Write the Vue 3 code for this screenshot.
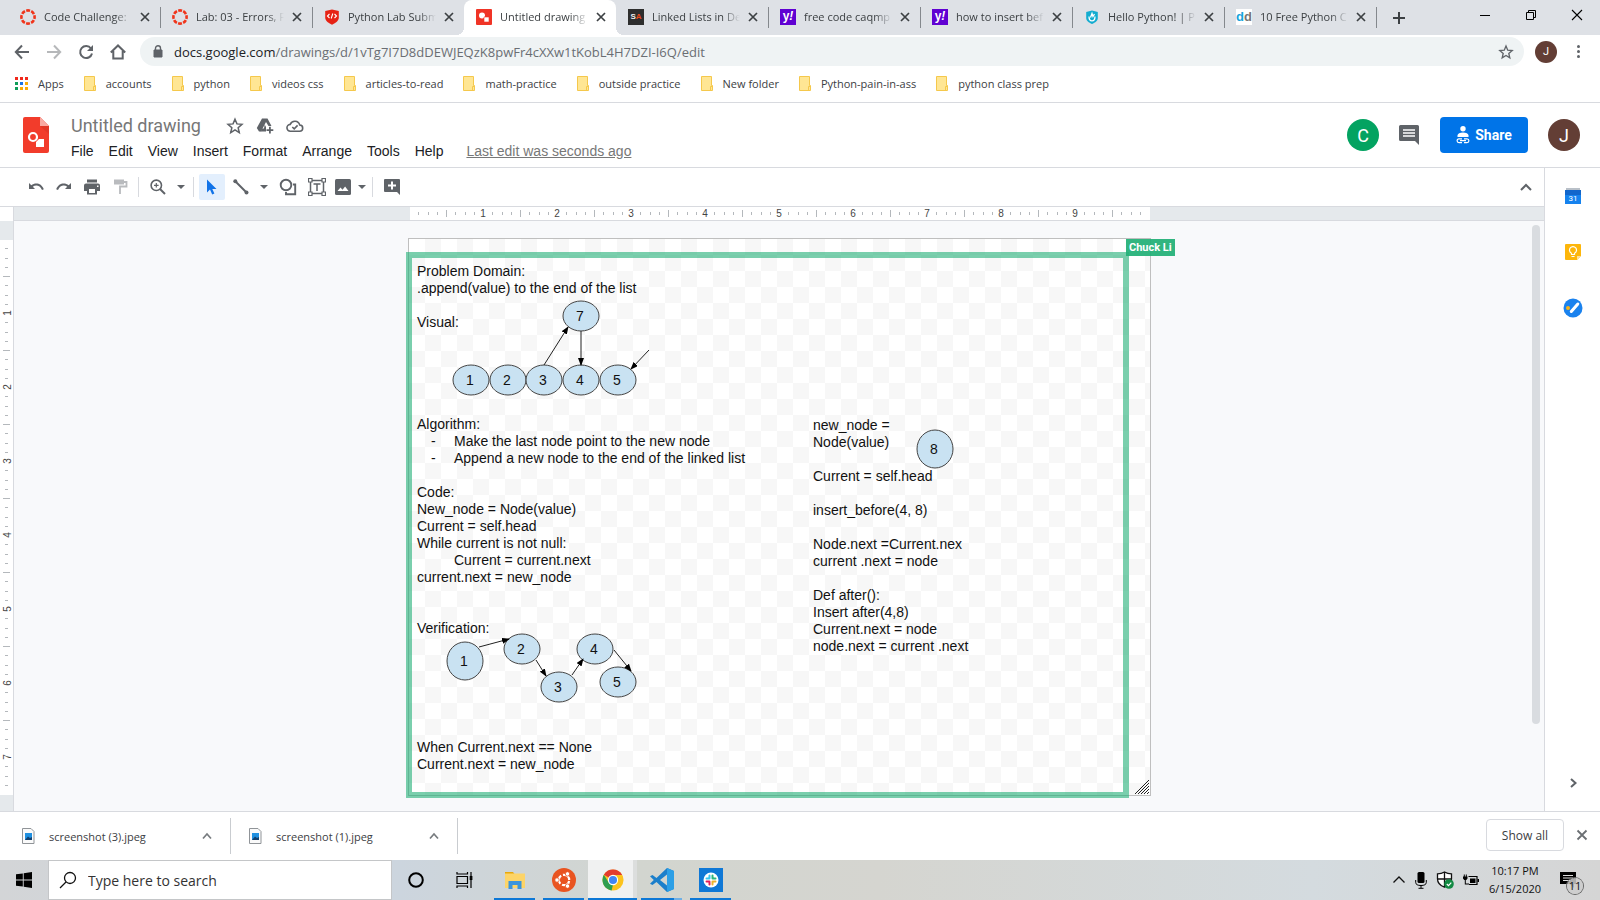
<script setup>
const tabs = [
  { title: 'Code Challenge:', icon: 'canvas' },
  { title: 'Lab: 03 - Errors, F', icon: 'canvas' },
  { title: 'Python Lab Subm', icon: 'shield' },
  { title: 'Untitled drawing', icon: 'draw', active: true },
  { title: 'Linked Lists in De', icon: 'sa' },
  { title: 'free code caqmp', icon: 'yahoo' },
  { title: 'how to insert bef', icon: 'yahoo' },
  { title: 'Hello Python! | P', icon: 'hex' },
  { title: '10 Free Python C', icon: 'dd' },
]
const bookmarks = ['accounts', 'python', 'videos css', 'articles-to-read', 'math-practice', 'outside practice', 'New folder', 'Python-pain-in-ass', 'python class prep']
const menus = ['File', 'Edit', 'View', 'Insert', 'Format', 'Arrange', 'Tools', 'Help']

const inch = 74
const ruler = (inches) => {
  const marks = []
  for (let i = 1; i < inches * 8; i++) {
    const at = Math.round((i * inch) / 8)
    marks.push(i % 8 === 0 ? { at, label: i / 8 } : { at, size: i % 4 === 0 ? 7 : 3 })
  }
  return marks
}
const across = ruler(10)
const down = ruler(7.5)

const mainText = `Problem Domain:
.append(value) to the end of the list

Visual:





Algorithm:
{-}Make the last node point to the new node
{-}Append a new node to the end of the linked list

Code:
New_node = Node(value)
Current = self.head
While current is not null:
{ }Current = current.next
current.next = new_node


Verification:






When Current.next == None
Current.next = new_node`.split('\n').map((line) => {
  const m = line.match(/^\{(.)\}(.*)$/)
  return m ? { mark: m[1], text: m[2] } : { text: line }
})
const sideText = `new_node =
Node(value)

Current = self.head

insert_before(4, 8)

Node.next =Current.nex
current .next = node

Def after():
Insert after(4,8)
Current.next = node
node.next = current .next`.split('\n')

// Node and arrow positions on the drawing canvas
const nodes = [
  { n: 7, x: 172, y: 77, r: 15 },
  { n: 1, x: 62, y: 141, r: 15 },
  { n: 2, x: 99, y: 141, r: 15 },
  { n: 3, x: 135, y: 141, r: 15 },
  { n: 4, x: 172, y: 141, r: 15 },
  { n: 5, x: 209, y: 141, r: 15 },
  { n: 8, x: 526, y: 210, r: 19 },
  { n: 1, x: 56, y: 422, r: 19 },
  { n: 2, x: 113, y: 410, r: 15 },
  { n: 3, x: 150, y: 448, r: 15 },
  { n: 4, x: 186, y: 410, r: 15 },
  { n: 5, x: 209, y: 443, r: 15 },
]
const arrows = [
  [135, 126, 159, 88],
  [172, 92, 172, 126],
  [240, 111, 222, 130],
  [70, 408, 100, 400],
  [127, 421, 137, 437],
  [163, 436, 174, 420],
  [205, 411, 222, 432],
]
const files = ['screenshot (3).jpeg', 'screenshot (1).jpeg']
</script>

<template>
  <div class="screen">
    <header class="browser">
      <div class="tabstrip">
        <div v-for="(t, i) in tabs" :key="i" class="tab" :class="{ active: t.active, plain: i === 2 }">
          <svg v-if="t.icon === 'canvas'" class="fav" viewBox="0 0 16 16"><circle cx="8" cy="8" r="6.6" fill="none" stroke="#f0351c" stroke-width="2.6" stroke-dasharray="3.9 1.28" stroke-dashoffset="2" /></svg>
          <svg v-else-if="t.icon === 'shield'" class="fav" viewBox="0 0 16 16"><path d="M8 .5 14.8 2v6.500c0 3.500-3 5.500-6.800 7.200C4.200 14 1.200 12 1.200 8.500V2z" fill="#e62214" /><path d="M5.500 5 3.500 7l2 2M10.500 5l2 2-2 2M8.800 4.500l-1.600 5" fill="none" stroke="#fff" stroke-width="1.100" /></svg>
          <svg v-else-if="t.icon === 'draw'" class="fav" viewBox="0 0 16 16"><rect width="16" height="16" rx="1" fill="#f03426" /><circle cx="6" cy="6.500" r="3" fill="#fff" /><path d="M8 8h5v5H8z" fill="#fff" stroke="#f03426" stroke-width=".6" /></svg>
          <span v-else-if="t.icon === 'sa'" class="fav badge-sa">S<b>A</b></span>
          <span v-else-if="t.icon === 'yahoo'" class="fav badge-y">y<i>!</i></span>
          <svg v-else-if="t.icon === 'hex'" class="fav" viewBox="0 0 16 16"><path d="M8 1.500 13.800 3v6c0 3-2.500 4.500-5.800 6C4.700 13.500 2.200 12 2.200 9V3z" fill="#13acd0" /><path d="M5 7.500C5 11 7 11.800 8 11.800S11 11 11 7.500M6.500 8.500 8 4.500l1 3 1.500-2.500" fill="none" stroke="#fff" stroke-width="1.300" /></svg>
          <span v-else class="fav badge-dd">d<b>d</b></span>
          <span class="tab-title">{{ t.title }}</span>
          <button class="tab-close" aria-label="Close tab"><svg width="10" height="10" viewBox="0 0 10 10"><path d="M1 1l8 8M9 1L1 9" stroke="#3c4043" stroke-width="1.700" /></svg></button>
        </div>
        <button class="newtab" aria-label="New tab"><svg width="14" height="14" viewBox="0 0 14 14"><path d="M7 1v12M1 7h12" stroke="#3c4043" stroke-width="2" /></svg></button>
        <div class="winctl">
          <button aria-label="Minimize"><svg width="12" height="12" viewBox="0 0 12 12"><path d="M1 6.500h10" stroke="#000" /></svg></button>
          <button aria-label="Restore"><svg width="12" height="12" viewBox="0 0 12 12" fill="none" stroke="#000"><path d="M1.500 3.500h7v7h-7zM3.500 3V1.500h7v7H9" /></svg></button>
          <button aria-label="Close"><svg width="12" height="12" viewBox="0 0 12 12"><path d="M1 1l10 10M11 1L1 11" stroke="#000" stroke-width="1.100" /></svg></button>
        </div>
      </div>

      <div class="navbar">
        <button class="nav" aria-label="Back"><svg viewBox="0 0 16 16"><path d="M15 8H2M8 1.500 1.800 8 8 14.500" /></svg></button>
        <button class="nav dim" aria-label="Forward"><svg viewBox="0 0 16 16"><path d="M1 8h13M8 1.500 14.200 8 8 14.500" /></svg></button>
        <button class="nav" aria-label="Reload"><svg viewBox="0 0 16 16"><path d="M13 4.500A6 6 0 1 0 14 9.500" /><path d="M15 1v6H9z" fill="#5f6368" stroke="none" /></svg></button>
        <button class="nav" aria-label="Home"><svg viewBox="0 0 16 16"><path d="M.8 8.500 8 1.500l7.200 7M3.300 7v7.500h9.400V7" /></svg></button>
        <div class="omnibox">
          <svg width="10" height="13" viewBox="0 0 10 13"><path d="M1 5h8v7H1z" fill="#5f6368" stroke="#5f6368" /><path d="M2.500 5V3.300a2.500 2.500 0 0 1 5 0V5" fill="none" stroke="#5f6368" stroke-width="1.400" /></svg>
          <a class="url" href="#"><span>docs.google.com</span>/drawings/d/1vTg7I7D8dDEWJEQzK8pwFr4cXXw1tKobL4H7DZI-I6Q/edit</a>
          <svg width="16" height="16" viewBox="0 0 24 24"><path d="m12 3 2.600 6.200 6.700.6-5.100 4.400 1.500 6.600-5.700-3.500-5.700 3.500 1.500-6.600-5.100-4.400 6.700-.6z" fill="none" stroke="#5f6368" stroke-width="2" /></svg>
        </div>
        <button class="avatar tiny" aria-label="Profile">J</button>
        <button class="dots" aria-label="Menu"><i></i><i></i><i></i></button>
      </div>

      <nav class="bookmarks">
        <a href="#" class="apps"><svg width="13" height="13" viewBox="0 0 13 13"><path d="M0 0h3v3H0zM5 0h3v3H5zM10 0h3v3h-3z" fill="#f0291c" /><path d="M0 5h3v3H0zM0 10h3v3H0z" fill="#0f9d58" /><path d="M5 5h3v3H5z" fill="#1a73e8" /><path d="M10 5h3v3h-3zM5 10h3v3H5zM10 10h3v3h-3z" fill="#fbab06" /></svg>Apps</a>
        <a v-for="b in bookmarks" :key="b" href="#"><svg width="12" height="15" viewBox="0 0 12 15"><path d="M.5.500h10v9h1v5H.5z" fill="#ffe694" stroke="#f5c84c" /><path d="M9.500 14V10.500h2" fill="none" stroke="#f5c84c" /></svg>{{ b }}</a>
      </nav>
    </header>

    <div class="dochead">
      <svg class="logo" width="26" height="36" viewBox="0 0 26 36"><path d="M2 0h15l9 9v25a2 2 0 0 1-2 2H2a2 2 0 0 1-2-2V2a2 2 0 0 1 2-2z" fill="#f23c2b" /><path d="M17 0l9 9h-9z" fill="#f9aaa2" /><path d="M17 9h9v8z" fill="#d23223" opacity=".5" /><circle cx="10" cy="20" r="4" fill="none" stroke="#fff" stroke-width="2.200" /><path d="M13 25l3-3h5v8h-8z" fill="#fff" /></svg>
      <div class="titles">
        <div class="titlerow">
          <h1>Untitled drawing</h1>
          <button aria-label="Star"><svg width="18" height="18" viewBox="0 0 24 24"><path d="m12 3 2.600 6.200 6.700.6-5.100 4.400 1.500 6.600-5.700-3.500-5.700 3.500 1.500-6.600-5.100-4.400 6.700-.6z" fill="none" stroke="#5f6368" stroke-width="2" /></svg></button>
          <button aria-label="Add shortcut to Drive"><svg width="18" height="18" viewBox="0 0 18 18" fill="#5f6368"><path d="M6 1.500h5.500L15.500 9h-3L10 5 5 14.500H3L.8 11z" /><path d="M8.700 7.500 10 10v4.500H4.500L6.300 11.500H8z" /><path d="M13 9.800h1.800v2.500h2.500V14h-2.500v2.500H13V14h-2.500v-1.700H13z" /></svg></button>
          <button aria-label="Saved to Drive"><svg width="18" height="18" viewBox="0 0 18 18" fill="none" stroke="#5f6368" stroke-width="1.600"><path d="M4.500 14.200a3.400 3.400 0 0 1-.3-6.800 5 5 0 0 1 9.500.6 3.100 3.100 0 0 1-.2 6.200z" /><path d="M6.300 10l1.900 1.900 3.400-3.500" /></svg></button>
        </div>
        <nav class="menus">
          <button v-for="m in menus" :key="m">{{ m }}</button>
          <a href="#">Last edit was seconds ago</a>
        </nav>
      </div>
      <div class="people">
        <button class="avatar green" aria-label="Chuck Li">C</button>
        <button class="comment" aria-label="Comments"><svg width="20" height="20" viewBox="0 0 20 20"><path d="M1.500 0h17A1.500 1.500 0 0 1 20 1.500V20l-4-4H1.500A1.500 1.500 0 0 1 0 14.500v-13A1.500 1.500 0 0 1 1.500 0z" fill="#5f6368" /><path d="M4 5h12M4 8h12M4 11h12" stroke="#fff" stroke-width="1.600" /></svg></button>
        <button class="share"><svg width="14" height="18" viewBox="0 0 14 18"><circle cx="7" cy="2.800" r="2.700" fill="#fff" /><path d="M1.500 11V9.500C1.500 7.500 4 6.500 7 6.500s5.500 1 5.500 3V11z" fill="#fff" /><path d="M6 12.800H3a1.900 1.900 0 0 0 0 3.800h3M8 12.800h3a1.900 1.900 0 0 1 0 3.800H8M4 14.700h6" fill="none" stroke="#fff" stroke-width="1.200" /></svg>Share</button>
        <button class="avatar" aria-label="Account">J</button>
      </div>
    </div>

    <div class="body">
      <main class="editor">
        <div class="tools">
          <button aria-label="Undo"><svg viewBox="0 0 18 18"><path d="M2 5v6h6L5.800 8.800C8.500 6.800 13 7 15 12l1.800-.7C14.500 4.800 8 4.300 4.300 7.300z" fill="#5f6368" /></svg></button>
          <button aria-label="Redo"><svg viewBox="0 0 18 18"><path d="M16 5v6h-6l2.200-2.200C9.500 6.800 5 7 3 12l-1.800-.7C3.500 4.800 10 4.300 13.700 7.300z" fill="#5f6368" /></svg></button>
          <button aria-label="Print"><svg viewBox="0 0 18 18" fill="#5f6368"><path d="M4 1.500h10v3H4z" /><path fill-rule="evenodd" d="M3 5.500h12a2 2 0 0 1 2 2V13h-3v3.500H4V13H1V7.500a2 2 0 0 1 2-2zM6 11v4h6v-4zm8-3.500V9h1.500V7.500z" /></svg></button>
          <button aria-label="Paint format"><svg viewBox="0 0 18 18"><path d="M3 1.500h10v5H3z" fill="#b9bbbe" /><path d="M13 4h2.500v4.500H9V16" fill="none" stroke="#b9bbbe" stroke-width="1.800" /></svg></button>
          <span class="sep"></span>
          <button aria-label="Zoom"><svg viewBox="0 0 18 18" fill="none" stroke="#5f6368"><circle cx="7.300" cy="7.300" r="5.200" stroke-width="1.600" /><path d="m11 11 5 5" stroke-width="2" /><path d="M7.300 5v4.600M5 7.300h4.600" stroke-width="1.200" /></svg></button>
          <button class="drop" aria-label="Zoom options"></button>
          <span class="sep"></span>
          <button class="on" aria-label="Select"><svg viewBox="0 0 18 18"><path d="M4 1.500v13l3-3 2.200 5 2.200-1L9.300 11h4.200z" fill="#1173e8" /></svg></button>
          <button aria-label="Line"><svg viewBox="0 0 18 18"><path d="m3.500 3.500 11 11" stroke="#5f6368" stroke-width="2" /><circle cx="3.300" cy="3.300" r="2" fill="#5f6368" /><circle cx="14.500" cy="14.500" r="2" fill="#5f6368" /></svg></button>
          <button class="drop" aria-label="Line options"></button>
          <button class="wide" aria-label="Shape"><svg viewBox="0 0 18 18" fill="none" stroke="#5f6368" stroke-width="1.900"><circle cx="7" cy="7" r="5.300" /><path d="M14 6.500h2.200v9.700H7V14" /></svg></button>
          <button aria-label="Text box"><svg viewBox="0 0 18 18"><path d="M2.500 2.500h13v13h-13zM5.500 6h7M9 6v7" fill="none" stroke="#5f6368" stroke-width="1.500" /><path d="M.5.500h3.500v3.500H.5zM14 .5h3.500v3.500H14zM.5 14h3.500v3.500H.5zM14 14h3.500v3.500H14z" fill="#fff" stroke="#5f6368" stroke-width="1.200" /></svg></button>
          <button class="tight" aria-label="Image"><svg viewBox="0 0 18 18"><rect x="1" y="1" width="16" height="16" rx="1.500" fill="#5f6368" /><path d="M3.500 13 6.500 9.500l2 2.300 2.600-3.300 3.400 4.500z" fill="#fff" /></svg></button>
          <button class="drop near" aria-label="Image options"></button>
          <span class="sep"></span>
          <button aria-label="Add comment"><svg viewBox="0 0 18 18"><path d="M2 1h14a1 1 0 0 1 1 1v15l-3-3H2a1 1 0 0 1-1-1V2a1 1 0 0 1 1-1z" fill="#5f6368" /><path d="M9 3.500v8M5 7.500h8" stroke="#fff" stroke-width="2" /></svg></button>
          <button class="hide" aria-label="Hide menus"><svg viewBox="0 0 18 18"><path d="m4 12 5-5 5 5" fill="none" stroke="#5f6368" stroke-width="2" /></svg></button>
        </div>

        <div class="hruler">
          <svg width="740" height="13" viewBox="0 0 740 13">
            <rect width="740" height="13" fill="#fff" />
            <template v-for="m in across" :key="m.at">
              <text v-if="m.label" :x="m.at - 1" y="10" class="num">{{ m.label }}</text>
              <rect v-else :x="m.at - 1" :y="m.size > 3 ? 3 : 5" width="1" :height="m.size" fill="#b4b8bc" />
            </template>
          </svg>
        </div>

        <div class="stage">
          <div class="vruler">
            <svg width="13" height="555" viewBox="0 0 13 555">
              <rect width="13" height="555" fill="#fff" />
              <template v-for="m in down" :key="m.at">
                <text v-if="m.label" :transform="`translate(11 ${m.at - 1}) rotate(-90)`" class="num">{{ m.label }}</text>
                <rect v-else :y="m.at - 1" :x="m.size > 3 ? 3 : 5" height="1" :width="m.size" fill="#b4b8bc" />
              </template>
            </svg>
          </div>
          <div class="desk">
            <div class="paper">
              <div class="maintext">
                <p v-for="(l, i) in mainText" :key="i"><span v-if="l.mark" class="mark">{{ l.mark }}</span>{{ l.text }}</p>
              </div>
              <div class="sidetext">
                <p v-for="(l, i) in sideText" :key="i">{{ l }}</p>
              </div>
              <svg class="graph" width="741" height="556" viewBox="0 0 741 556">
                <defs><marker id="head" markerWidth="8" markerHeight="6" refX="7" refY="3" orient="auto" markerUnits="userSpaceOnUse"><path d="M0 0l8 3-8 3z" /></marker></defs>
                <g v-for="(c, i) in nodes" :key="i">
                  <ellipse :cx="c.x" :cy="c.y" rx="18" :ry="c.r" />
                  <text :x="c.x - 1" :y="c.y + 5">{{ c.n }}</text>
                </g>
                <line v-for="(a, i) in arrows" :key="'a' + i" :x1="a[0]" :y1="a[1]" :x2="a[2]" :y2="a[3]" marker-end="url(#head)" />
              </svg>
              <svg class="grip" width="14" height="14" viewBox="0 0 14 14"><path d="M0 14 14 0M3 14 14 3M6 14l8-8M9 14l5-5M12 14l2-2" stroke="#222" /></svg>
              <div class="selection"><span>Chuck Li</span></div>
            </div>
            <div class="scrollbar"></div>
          </div>
        </div>
      </main>

      <aside class="panel">
        <button aria-label="Calendar"><svg width="20" height="20" viewBox="0 0 20 20"><path d="M3 2h14v2H3z" fill="#b9c0c8" /><path d="M2 4h16v14H2z" fill="#1582ee" /><path d="M2 4h16v5H2z" fill="#1266cb" /><text x="10" y="15" class="cal">31</text></svg></button>
        <button aria-label="Keep"><svg width="20" height="20" viewBox="0 0 20 20"><path d="M3 2h14a1 1 0 0 1 1 1v11l-4 4H3a1 1 0 0 1-1-1V3a1 1 0 0 1 1-1z" fill="#fdb60b" /><path d="M14 18v-4h4z" fill="#fde099" /><path d="M8.500 12.500v-1.300a3.500 3.500 0 1 1 3 0v1.300zM8.500 14.500h3" fill="none" stroke="#fff" stroke-width="1.200" /></svg></button>
        <button aria-label="Tasks"><svg width="20" height="20" viewBox="0 0 20 20"><circle cx="10" cy="10" r="9.500" fill="#1a82ee" /><path d="m8.300 13.500 6.500-7.500" stroke="#fff" stroke-width="3" stroke-linecap="round" /><circle cx="5" cy="10" r="2" fill="#fbb413" /></svg></button>
        <button class="last" aria-label="Hide side panel"><svg width="18" height="18" viewBox="0 0 18 18"><path d="m7 5 4.500 4L7 13" fill="none" stroke="#5f6368" stroke-width="2" /></svg></button>
      </aside>
    </div>

    <div class="downloads">
      <div v-for="f in files" :key="f" class="file">
        <svg width="13" height="16" viewBox="0 0 13 16"><path d="M.5.500h8.500l3 3v12H.5z" fill="#fafafa" stroke="#909498" /><path d="M3 5h7v7H3z" fill="#2090e0" /><path d="M3 12 6 8.500 8 10l2-1v3z" fill="#12406e" /></svg>
        <a href="#">{{ f }}</a>
        <button aria-label="File options"><svg width="12" height="12" viewBox="0 0 12 12"><path d="m2 8.500 4-4.500 4 4.500" fill="none" stroke="#777b7f" stroke-width="1.700" /></svg></button>
      </div>
      <div class="bar-actions">
        <button class="showall">Show all</button>
        <button aria-label="Close downloads"><svg width="12" height="12" viewBox="0 0 12 12"><path d="m1.500 1.500 9 9M10.500 1.500l-9 9" stroke="#6b6f73" stroke-width="1.800" /></svg></button>
      </div>
    </div>

    <footer class="taskbar">
      <button class="start" aria-label="Start"><svg width="16" height="16" viewBox="0 0 16 16"><path d="M0 2.300 6.800 1.400V7.600H0zM7.700 1.200 16 0v7.600H7.700zM0 8.400h6.800v6.200L0 13.700zM7.700 8.400H16V16l-8.300-1.200z" /></svg></button>
      <label class="search"><svg width="18" height="18" viewBox="0 0 18 18"><circle cx="11" cy="7" r="5.500" fill="none" stroke="#111" stroke-width="1.300" /><path d="m7 11-6 6" stroke="#111" stroke-width="1.300" /></svg><input type="text" placeholder="Type here to search" aria-label="Type here to search" /></label>
      <div class="pinned">
        <button aria-label="Cortana"><svg width="18" height="18" viewBox="0 0 18 18"><circle cx="8" cy="9" r="6.800" fill="none" stroke="#000" stroke-width="2" /></svg></button>
        <button aria-label="Task View"><svg width="20" height="18" viewBox="0 0 20 18" fill="none" stroke="#000" stroke-width="1.200"><path d="M1 5.500h10.500v7H1zM1 1v2h10.500V1M1 17v-2h10.500v2M15 1v4M15 9v8" /><path d="M14.300 5.500h1.500v3h-1.500z" fill="#000" /></svg></button>
        <button class="open" aria-label="File Explorer"><svg width="22" height="20" viewBox="0 0 22 20"><path d="M1 2h8l1.500 2H1z" fill="#e8a80c" /><path d="M1 3.500h20V18H1z" fill="#fdd468" /><path d="M4.500 19v-8h13v8h-4v-4h-5v4z" fill="#3a94dd" /></svg></button>
        <button class="open" aria-label="Ubuntu"><svg width="24" height="24" viewBox="0 0 24 24"><circle cx="12" cy="12" r="12" fill="#e95420" /><circle cx="12" cy="12" r="5.200" fill="none" stroke="#fff" stroke-width="2.200" stroke-dasharray="9 1.890" stroke-dashoffset="-1" /><g fill="#fff" stroke="#e95420" stroke-width=".8"><circle cx="5" cy="12" r="2.200" /><circle cx="15.500" cy="5.900" r="2.200" /><circle cx="15.500" cy="18.100" r="2.200" /></g></svg></button>
        <button class="open current" aria-label="Chrome"><svg width="22" height="22" viewBox="0 0 24 24"><circle cx="12" cy="12" r="11.500" fill="#fcc31e" /><path d="M12 12 2 6.300A11.500 11.500 0 0 1 22 6.500H12z" fill="#e33b2e" /><path d="M2 6.300 7.500 15 12 17l-1.500 6.400A11.500 11.500 0 0 1 2 6.300z" fill="#2f9e4f" /><circle cx="12" cy="12" r="5.600" fill="#fff" /><circle cx="12" cy="12" r="4.400" fill="#4285f4" /></svg></button>
        <button class="open multi" aria-label="Visual Studio Code"><svg width="24" height="24" viewBox="0 0 24 24"><path d="M17 0 6.500 10 2.500 7 0 8.200 3.800 12 0 15.800 2.500 17l4-3L17 24l7-3V3zM17 6.500v11L10 12z" fill="#1b7fcb" fill-rule="evenodd" /><path d="M17 0v24l7-3V3z" fill="#2c9fe6" /></svg></button>
        <button class="open" aria-label="Slack"><svg width="24" height="24" viewBox="0 0 24 24"><path d="M0 0h24v24H0z" fill="#0f78d6" /><circle cx="12" cy="12" r="7.500" fill="#fff" /><g stroke-width="2" stroke-linecap="round"><path d="M10.500 7.500v3M7.500 10.500h2" stroke="#36c5f0" /><path d="M7.500 13.500h3M10.500 14.500v2" stroke="#e01e5a" /><path d="M13.500 7.500v3M14.500 10.500h2" stroke="#2eb67d" /><path d="M13.500 13.500v3M14.500 13.500h2" stroke="#ecb22e" /></g></svg></button>
      </div>
      <div class="tray">
        <svg width="14" height="14" viewBox="0 0 14 14"><path d="m1.500 9.500 5.500-5.500 5.500 5.500" fill="none" stroke="#111" stroke-width="1.300" /></svg>
        <svg width="12" height="17" viewBox="0 0 12 17"><rect x="2.500" y="0" width="7" height="11" rx="1.500" /><path d="M.7 8v2.500c0 2 2 3 5.300 3s5.300-1 5.300-3V8M6 13.500V16M3.500 16.300h5" fill="none" stroke="#000" /></svg>
        <svg width="18" height="18" viewBox="0 0 18 18"><path d="M8.500 1C6.500 2.200 4 2.800 1.500 2.800V8c0 4 2.500 6.500 7 8.200 4.500-1.700 7-4.200 7-8.200V2.800C13 2.800 10.500 2.200 8.500 1z" fill="#fff" stroke="#111" stroke-width="1.300" /><path d="M8.500 1v15M1.500 8h14" stroke="#111" stroke-width="1.300" /><circle cx="13" cy="13" r="4.800" fill="#128a43" /><path d="m10.800 13 1.700 1.700 2.800-3" fill="none" stroke="#fff" stroke-width="1.200" /></svg>
        <svg width="16" height="12" viewBox="0 0 16 12"><path d="M5.500 2.500h8.500v8H6" fill="none" stroke="#000" stroke-width="1.200" /><path d="M7 4.500h5.500v4.500H7zM14.500 5H16v3h-1.500zM0 2.500h4.500v2L3.300 6H1.200L0 4.500zM.8.500h1v2h-1zM2.800.5h1v2h-1zM1.800 6h1v3.500H6v1H1.800z" /></svg>
        <time><span>10:17 PM</span><span>6/15/2020</span></time>
        <span class="notice"><svg width="16" height="16" viewBox="0 0 16 16"><path d="M0 0h16v12h-2v4l-4-4H0z" /><path d="M3 3.500h10M3 6h10M3 8.500h7" stroke="#ddd" /></svg><b>11</b></span>
      </div>
    </footer>
  </div>
</template>

<style>
html, body { margin: 0; }
</style>

<style scoped>
.screen { --ui: "Open Sans", "Noto Sans", sans-serif; --doc: "Liberation Sans", Arial, sans-serif; display: flex; flex-direction: column; min-height: 100vh; font-family: var(--ui); font-size: 11px; color: #3c4043; background: #fff; }
button { border: 0; padding: 0; background: none; font: inherit; color: inherit; display: flex; align-items: center; justify-content: center; cursor: pointer; }
a { color: inherit; text-decoration: none; }
svg { display: block; flex: none; }
p, h1 { margin: 0; }

.tabstrip { display: flex; height: 35px; background: #dee1e6; padding-left: 8px; }
.tab { position: relative; box-sizing: border-box; width: 152px; min-width: 0; display: flex; align-items: center; padding: 0 10px 2px 12px; }
.tab::after { content: ""; position: absolute; right: -1px; top: 7px; width: 1px; height: 21px; background: #84888d; }
.tab.plain::after { display: none; }
.tab.active { background: #fff; border-radius: 8px 8px 0 0; }
.tab.active::before, .tab.active::after { content: ""; position: absolute; top: auto; bottom: 0; width: 8px; height: 8px; }
.tab.active::before { left: -8px; background: radial-gradient(circle at 0 0, transparent 8px, #fff 8px); }
.tab.active::after { right: -8px; background: radial-gradient(circle at 100% 0, transparent 8px, #fff 8px); }
.fav { width: 16px; height: 16px; margin-right: 8px; flex: none; }
.tab-title { flex: 1; min-width: 0; overflow: hidden; white-space: nowrap; -webkit-mask-image: linear-gradient(90deg, #000 80%, transparent); mask-image: linear-gradient(90deg, #000 80%, transparent); }
.tab-close { width: 10px; margin-left: 8px; }
.badge-sa, .badge-y, .badge-dd { font: bold 8px/16px var(--doc); text-align: center; }
.badge-sa { background: #2e2e2e; color: #eee; }
.badge-sa b { color: #e8491d; }
.badge-y { background: #6001d2; color: #fff; font-size: 12px; line-height: 14px; }
.badge-dd { background: #fff; color: #17a5dc; font-size: 13px; }
.badge-dd b { color: #777; }
.newtab { width: 28px; margin-left: 9px; }
.winctl { margin-left: auto; display: flex; height: 30px; }
.winctl button { width: 46px; }

.navbar { display: flex; align-items: center; height: 33px; padding: 0 13px 0 6px; }
.nav { width: 32px; height: 28px; }
.nav svg { width: 16px; height: 16px; fill: none; stroke: #5f6368; stroke-width: 2; }
.nav.dim { opacity: .45; }
.omnibox { flex: 1; height: 29px; margin: 0 11px 0 6px; border-radius: 15px; background: #eff3f4; display: flex; align-items: center; padding: 0 10px 0 13px; }
.url { flex: 1; margin-left: 11px; font-size: 13px; color: #6a6e73; }
.url span { color: #202124; }
.avatar { width: 32px; height: 32px; border-radius: 50%; background: #633e35; color: #fff; font: 18px Roboto, sans-serif; }
.avatar.green { background: #03a361; }
.avatar.tiny { width: 22px; height: 22px; font-size: 11px; }
.dots { flex-direction: column; gap: 2px; width: 18px; margin-left: 12px; }
.dots i { width: 3px; height: 3px; border-radius: 50%; background: #5f6368; }

.bookmarks { display: flex; align-items: center; gap: 20px; height: 31px; padding: 0 0 3px 15px; border-bottom: 1px solid #d8dadf; }
.bookmarks a { display: flex; align-items: center; gap: 10px; white-space: nowrap; }

.dochead { display: flex; align-items: center; height: 64px; padding: 0 20px 0 23px; border-bottom: 1px solid #d8dadf; }
.titles { margin-left: 22px; padding-top: 5px; }
.titlerow { display: flex; align-items: center; gap: 12px; height: 26px; }
.titlerow h1 { font: 18px/26px Roboto, sans-serif; color: #777; margin-right: 13px; }
.menus { display: flex; align-items: center; gap: 15px; height: 24px; font: 14px var(--doc); color: #202124; }
.menus a { margin-left: 8px; color: #777; text-decoration: underline; }
.people { margin-left: auto; display: flex; align-items: center; }
.comment { margin-left: 20px; }
.share { width: 88px; height: 36px; margin: 0 20px 0 21px; gap: 5px; border-radius: 4px; background: #0074e8; color: #fff; font: bold 14px Roboto, sans-serif; }

.body { flex: 1; display: flex; }
.editor { flex: 1; min-width: 0; display: flex; flex-direction: column; }
.tools { display: flex; align-items: center; height: 38px; padding: 0 9px 0 22px; border-bottom: 1px solid #d8dadf; }
.tools button { width: 28px; height: 26px; border-radius: 2px; }
.tools button svg { width: 18px; height: 18px; }
.tools .drop { width: 17px; }
.tools .near { width: 13px; }
.drop::before { content: ""; border: 4px solid transparent; border-top-color: #5f6368; border-bottom: 0; }
.tools .wide { width: 31px; }
.tools .tight { width: 24px; }
.tools .on { width: 26px; margin-right: 2px; background: #e3effd; }
.tools .hide { margin-left: auto; width: 18px; }
.sep { width: 1px; height: 20px; margin: 0 5px 0 4px; background: #d8dadf; }

.hruler { display: flex; justify-content: center; height: 13px; margin-left: 13px; padding-left: 2px; background: #e5e9ec; border-bottom: 1px solid #d8dadf; border-left: 1px solid #d8dadf; }
.num { font: 10px var(--doc); fill: #444; text-anchor: middle; }
.stage { flex: 1; display: flex; background: #f8f9fb; }
.vruler { width: 13px; padding-top: 19px; background: #e5e9ec; border-right: 1px solid #d8dadf; }
.desk { position: relative; flex: 1; display: flex; justify-content: center; align-items: flex-start; padding: 17px 0 0 1px; }
.paper { position: relative; display: grid; grid-template-columns: 397px 344px; height: 556px; border: 1px solid #bfbfbf; background: repeating-conic-gradient(#f7f7f7 0 25%, #fff 0 50%) 0 0 / 32px 32px; color: #111; font: 14px/17px var(--doc); }
.maintext { padding: 24px 0 0 8px; }
.sidetext { padding: 178px 0 0 7px; }
.paper p { width: fit-content; height: 17px; white-space: pre; }
.mark { display: inline-block; box-sizing: border-box; width: 37px; padding-left: 14px; }
.graph { position: absolute; left: 0; top: 0; }
.graph ellipse { fill: #c9e2f2; stroke: #444; }
.graph line { stroke: #222; }
.graph text { font: 14px var(--doc); fill: #111; text-anchor: middle; }
.grip { position: absolute; right: 1px; bottom: 1px; }
.selection { position: absolute; left: -3px; top: 13px; right: 21px; bottom: -3px; box-sizing: border-box; border: 6px solid rgba(33, 175, 118, .6); }
.selection span { position: absolute; left: 100%; bottom: 100%; margin-left: 3px; margin-bottom: 2px; padding: 0 3px; background: rgba(33, 175, 118, .93); color: #fff; font: bold 11px/17px Roboto, sans-serif; white-space: nowrap; }
.scrollbar { position: absolute; right: 4px; top: 4px; width: 8px; height: 499px; border-radius: 4px; background: #d9dce0; }

.panel { width: 54px; border-left: 1px solid #d8dadf; display: flex; flex-direction: column; align-items: center; gap: 36px; padding: 18px 0 19px 1px; }
.panel .last { margin-top: auto; }
.cal { font: 8px Roboto, sans-serif; fill: #fff; text-anchor: middle; }

.downloads { display: flex; align-items: center; height: 48px; padding-right: 12px; border-top: 1px solid #d8dadf; }
.file { box-sizing: border-box; width: 227px; height: 36px; display: flex; align-items: center; padding: 0 17px 0 18px; border-right: 1px solid #c9ccd0; }
.file:first-child { width: 231px; padding-left: 22px; }
.file a { margin-left: 14px; }
.file button { margin-left: auto; }
.bar-actions { margin: 0 0 2px auto; display: flex; align-items: center; gap: 12px; }
.showall { box-sizing: border-box; width: 78px; height: 32px; border: 1px solid #d8dadf; border-radius: 4px; font-size: 12px; }

.taskbar { display: flex; align-items: stretch; height: 40px; background: linear-gradient(90deg, #d3d5d7, #ccd5de 25%, #d2d5cf 40%, #d5d5d0 55%, #d4dbdf 82%, #d5d5d5); color: #111; }
.start { width: 48px; }
.search { box-sizing: border-box; width: 344px; display: flex; align-items: center; gap: 11px; padding: 0 10px; background: #fff; border: 1px solid #c4c6c8; }
.search input { flex: 1; min-width: 0; padding: 0; border: 0; outline: 0; background: none; font: 14px var(--ui); color: #222; }
.search input::placeholder { color: #333; opacity: 1; }
.pinned { display: flex; }
.pinned button { width: 49px; position: relative; }
.open::after { content: ""; position: absolute; left: 4px; right: 4px; bottom: 0; height: 2px; background: #0d78d6; }
.pinned .current { background: #f0f1f1; box-shadow: inset -4px 0 #dcdedd; }
.current::after { left: 0; right: 0; }
.multi::after { background: linear-gradient(90deg, #0d78d6 80%, #6fb0e6 80%); }
.tray { margin-left: auto; display: flex; align-items: center; gap: 9px; padding-right: 24px; }
time { display: flex; flex-direction: column; align-items: center; width: 54px; line-height: 18px; }
.notice { position: relative; margin-left: 9px; }
.notice b { position: absolute; left: 7px; top: 6px; width: 16px; height: 16px; border-radius: 50%; background: rgba(205, 205, 205, .85); box-shadow: 0 0 0 1px #666; font: 11px/16px var(--ui); text-align: center; }
</style>
